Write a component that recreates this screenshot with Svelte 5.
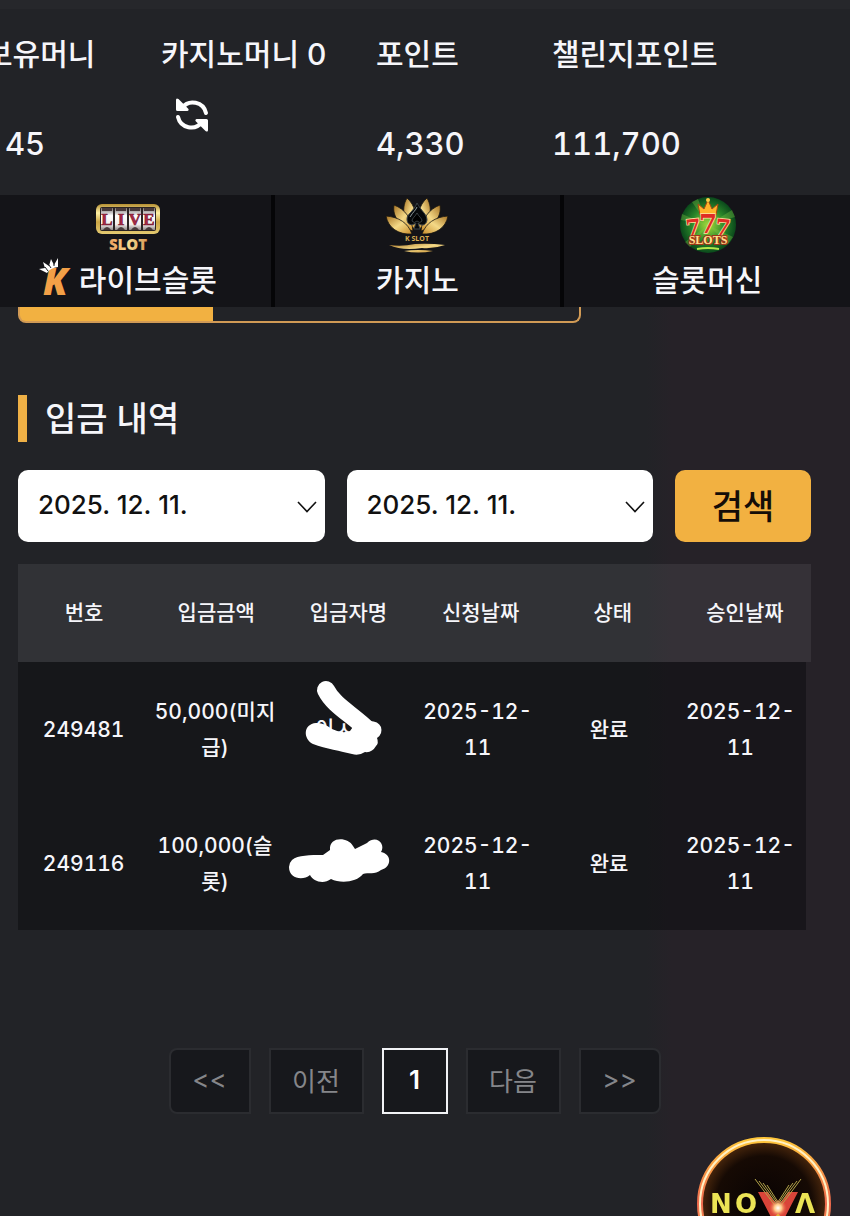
<script>
  const balances = [
    { label: '보유머니', value: '45', inset: true },
    { label: '카지노머니 0', refresh: true },
    { label: '포인트', value: '4,330' },
    { label: '챌린지포인트', value: '111,700' }
  ];
  const columns = ['번호', '입금금액', '입금자명', '신청날짜', '상태', '승인날짜'];
  const rows = [
    { id: '249481', amount: '50,000(미지급)', requested: '2025-12-11', status: '완료', approved: '2025-12-11' },
    { id: '249116', amount: '100,000(슬롯)', requested: '2025-12-11', status: '완료', approved: '2025-12-11' }
  ];
  const dates = ['시작 날짜', '종료 날짜'];
  const petals = [
    'M30 37C20 31 15 18 22 6C30 13 33 25 30 37Z',
    'M28 39C15 35 7 24 9 13C20 17 27 27 28 39Z',
    'M27 42C14 43 3 36 1 24C14 25 23 31 27 42Z'
  ];
</script>

<div class="page">
  <header class="balances">
    {#each balances as item}
      <div class="balance">
        <span class="label">{item.label}</span>
        {#if item.refresh}
          <button class="refresh" aria-label="새로고침">
            <svg width="36" height="36" viewBox="0 0 36 36" fill="none">
              <path d="M8 11A13.500 13.500 0 0 1 32 16" stroke="#fff" stroke-width="4" stroke-linecap="round" />
              <path d="M2 3V12.500Q2 14 3.500 14H13.500Q15.500 13.200 14 11.500L4.500 2Q2 .5 2 3Z" fill="#fff" />
              <path d="M28 25A13.500 13.500 0 0 1 4 20" stroke="#fff" stroke-width="4" stroke-linecap="round" />
              <path d="M34 33V23.500Q34 22 32.500 22H22.500Q20.500 22.800 22 24.500L31.500 34Q34 35.500 34 33Z" fill="#fff" />
            </svg>
          </button>
        {:else}
          <span class="value" class:inset={item.inset}>{item.value}</span>
        {/if}
      </div>
    {/each}
  </header>

  <nav class="games">
    <a href="#live">
      <svg width="66" height="56" viewBox="0 0 66 56">
        <defs>
          <linearGradient id="gold" x1="0" y1="0" x2="0" y2="1">
            <stop offset="0" stop-color="#b58f32" />
            <stop offset=".3" stop-color="#fff0a4" />
            <stop offset=".6" stop-color="#cba545" />
            <stop offset="1" stop-color="#e4ca71" />
          </linearGradient>
          <linearGradient id="reel" x1="0" y1="0" x2="0" y2="1">
            <stop offset="0" stop-color="#77706f" />
            <stop offset=".35" stop-color="#fff" />
            <stop offset=".75" stop-color="#f3eceb" />
            <stop offset="1" stop-color="#8b8382" />
          </linearGradient>
          <linearGradient id="goldText" x1="0" y1="0" x2="1" y2="0">
            <stop offset="0" stop-color="#ed9c5b" />
            <stop offset=".5" stop-color="#f7dc91" />
            <stop offset="1" stop-color="#d99955" />
          </linearGradient>
        </defs>
        <rect x="1" y="7" width="64" height="30" rx="6" fill="url(#gold)" />
        <rect x="5" y="10" width="56" height="24" rx="2" fill="#2a2323" />
        {#each ['L', 'I', 'V', 'E'] as letter, i}
          <rect x={6 + i * 14} y="11" width="12" height="22" fill="url(#reel)" />
          <path d="M{7 + i * 14} 11h10v3h-10zM{8 + i * 14} 33q4-6 8 0z" fill="#48393a" />
          <text x={12 + i * 14} y="28" text-anchor="middle" font-family="Liberation Serif" font-size="17" font-weight="700" fill="#a92945" stroke="#74172e" stroke-width=".6">{letter}</text>
        {/each}
        <text x="33" y="53" text-anchor="middle" font-family="Open Sans" font-size="15" font-weight="800" fill="url(#goldText)">SLOT</text>
      </svg>
      <span class="game-name">
        <svg width="36" height="38" viewBox="0 0 36 38">
          <text x="4" y="37" font-family="Open Sans" font-size="37" font-weight="800" font-style="italic" fill="#f3a047">K</text>
          <path d="M8 15L0 11L6 10L4 4L10 8L12 1L15 7L19 0L19 9Q11 10 8 15Z" fill="#fff" />
          <path d="M9 13L6 9M12 10L10 7M15 8L15 6" stroke="#17181c" stroke-width="1" fill="none" />
        </svg>
        라이브슬롯
      </span>
    </a>
    <a href="#casino">
      <svg width="66" height="56" viewBox="0 0 66 56">
        <defs>
          <linearGradient id="petal" x1="0" y1="0" x2="1" y2="1">
            <stop offset="0" stop-color="#a87424" />
            <stop offset=".5" stop-color="#f4d987" />
            <stop offset="1" stop-color="#c98d2b" />
          </linearGradient>
        </defs>
        <g transform="translate(1 -5)" fill="url(#petal)" stroke="#17140f" stroke-width=".8">
          {#each petals as d}<path {d} />{/each}
          <g transform="translate(64 0) scale(-1 1)">
            {#each petals as d}<path {d} />{/each}
          </g>
        </g>
        <path d="M33 6C37 14 43 17 43 23C42 29 37 29 34 26L36 32H30L32 26C28 29 23 28 23 22C23 17 30 14 33 6Z" fill="#06080a" stroke="#3b4347" />
        <path d="M26 20C29 15 32 13 33 10" stroke="#8b999e" fill="none" />
        <path d="M33 16C35 20 38 21 38 24Q36 27 33 24Q30 27 28 24C28 21 31 20 33 16Z" fill="#000" stroke="#5a6468" stroke-width=".6" />
        <text x="33" y="44" text-anchor="middle" font-family="Open Sans" font-size="7" font-weight="700" fill="#d8ac51">K SLOT</text>
        <path d="M5 48Q18 50 31 47Q45 46 61 48Q50 52 38 51Q18 54 5 48ZM20 54Q34 52 49 54Q34 57 20 54Z" fill="url(#petal)" />
      </svg>
      <span class="game-name">카지노</span>
    </a>
    <a href="#slots">
      <svg width="60" height="56" viewBox="0 0 60 56">
        <defs>
          <radialGradient id="felt">
            <stop offset="0" stop-color="#a6dc3b" />
            <stop offset=".6" stop-color="#298529" />
            <stop offset="1" stop-color="#0a481b" />
          </radialGradient>
        </defs>
        <circle cx="31" cy="28" r="28" fill="url(#felt)" />
        <path d="M31 28L5 17L4 23ZM31 28L8 45L13 50ZM31 28L55 13L58 20ZM31 28L51 47L56 40ZM31 28L15 5L21 2Z" fill="#80c946" opacity=".35" />
        <path d="M23 18L21 7L27 12L31 3L35 12L41 7L39 18Z" fill="#ffb42a" stroke="#a84912" />
        <circle cx="31" cy="3" r="2" fill="#ffce46" />
        <g font-family="DejaVu Serif" font-weight="700" text-anchor="middle" fill="#df2d24" stroke="#ffe2a1" stroke-width="1.500" paint-order="stroke">
          <text x="17" y="38" font-size="22" transform="rotate(-6 17 38)">7</text>
          <text x="45" y="38" font-size="22" transform="rotate(6 45 38)">7</text>
          <text x="31" y="36" font-size="26">7</text>
        </g>
        <text x="31" y="47" text-anchor="middle" font-family="Liberation Serif" font-size="12" font-weight="700" fill="#ffe18d" stroke="#a1341b" stroke-width="2" paint-order="stroke">SLOTS</text>
        <path d="M20 52Q31 50 42 52" stroke="#b3e84b" stroke-width="2" fill="none" />
      </svg>
      <span class="game-name">슬롯머신</span>
    </a>
  </nav>

  <main>
    <div class="tab-strip"></div>

    <h1>입금 내역</h1>

    <form class="filters" onsubmit={(e) => e.preventDefault()}>
      {#each dates as name}
        <div class="date">
          <select aria-label={name}><option>2025. 12. 11.</option></select>
          <svg class="chevron" width="20" height="12" viewBox="0 0 20 12" fill="none">
            <path d="M1 1L10 10.500L19 1" stroke="#111" stroke-width="1.600" />
          </svg>
        </div>
      {/each}
      <button class="search">검색</button>
    </form>

    <table>
      <thead>
        <tr>{#each columns as column}<th scope="col">{column}</th>{/each}</tr>
      </thead>
      <tbody>
        {#each rows as row, i}
          <tr>
            <td>{row.id}</td>
            <td>{row.amount}</td>
            <td class="name">
              {#if i === 0}
                <span class="partial">이ㅅ</span>
                <svg class="mark" width="110" height="80" viewBox="285 689 110 80" overflow="visible">
                  <path d="M325 690C333 706 351 714 368 731" stroke="#fff" stroke-width="18" stroke-linecap="round" stroke-linejoin="round" fill="none" />
                  <path d="M315 723C302 724 302 739 312 744C325 749 340 751 351 754Q358 756 364 752Q371 753 375 746Q378 743 376 738Q382 734 380 727Q377 720 366 721Q354 722 349 731Q341 734 331 729Q322 722 315 723Z" fill="#fff" />
                </svg>
              {:else}
                <svg class="mark" width="110" height="80" viewBox="285 823 110 80">
                  <path d="M291 860C297 855 309 855 322 855L329 850C328 836 347 837 352 846L354 849L366 843C376 834 385 845 380 852C391 854 391 867 380 870C374 875 367 872 362 874C356 882 340 884 330 879C322 885 312 881 309 875C302 881 288 879 288 867Q288 863 291 860Z" fill="#fff" />
                </svg>
              {/if}
            </td>
            <td>{row.requested}</td>
            <td>{row.status}</td>
            <td>{row.approved}</td>
          </tr>
        {/each}
      </tbody>
    </table>

    <nav class="pager" aria-label="페이지">
      <button class="first">&lt;&lt;</button>
      <button class="step">이전</button>
      <button class="current" aria-current="page">1</button>
      <button class="step">다음</button>
      <button class="last">&gt;&gt;</button>
    </nav>
  </main>

  <a class="nova" href="#nova" aria-label="NOVA">
    <svg width="144" height="144" viewBox="0 0 144 144">
      <defs>
        <linearGradient id="ring" x1="0" y1="0" x2="0" y2="1">
          <stop offset="0" stop-color="#ffc63a" />
          <stop offset=".3" stop-color="#f58a48" />
          <stop offset=".5" stop-color="#ef6a4e" />
          <stop offset="1" stop-color="#ffd34a" />
        </linearGradient>
        <radialGradient id="core">
          <stop offset="0" stop-color="#080303" />
          <stop offset=".75" stop-color="#160a04" />
          <stop offset="1" stop-color="#4d290d" />
        </radialGradient>
        <radialGradient id="flare">
          <stop offset="0" stop-color="#fff" />
          <stop offset=".4" stop-color="#ffc987" />
          <stop offset="1" stop-color="#f1573f" stop-opacity="0" />
        </radialGradient>
      </defs>
      <circle cx="72" cy="72" r="64" fill="url(#core)" stroke="url(#ring)" stroke-width="6" />
      <circle cx="72" cy="72" r="64" fill="none" stroke="#fff1c4" stroke-width="2" />
      <g font-family="DejaVu Sans" font-size="26" font-weight="700" fill="#ece455">
        <text x="18" y="81">N</text>
        <text x="43" y="81">O</text>
        <text x="103" y="81">Λ</text>
      </g>
      <path d="M66 60H76L86 76L96 60H106L91 89H81Z" fill="#d94439" />
      <path d="M63 47L84 75M67 49L85 73M71 51L86 72M75 53L86 70M109 47L88 75M105 49L87 73M101 51L86 72M97 53L86 70" stroke="#b3a54a" stroke-width="1" />
      <circle cx="86" cy="76" r="9" fill="url(#flare)" />
      <path d="M79 91L86 83L93 91" stroke="#e4b338" stroke-width="2" fill="none" />
    </svg>
  </a>
</div>

<style>
  :global(body) {
    margin: 0;
    background: #222327;
  }
  .page {
    min-height: 100vh;
    overflow: hidden;
    color: #f6f6fa;
    font-family: Inter, 'Noto Sans CJK KR', sans-serif;
    font-weight: 500;
    background: linear-gradient(90deg, #222327 76%, #262228 79%);
  }
  button, select {
    font: inherit;
    color: inherit;
    margin: 0;
  }
  a {
    color: inherit;
    text-decoration: none;
  }
  .balances {
    display: grid;
    grid-template-columns: 176fr 215fr 176fr 298fr;
    margin-left: -15px;
    border-top: 9px solid #26272b;
    padding: 23px 0 29px;
    background: #222327;
  }
  .balance {
    display: flex;
    flex-direction: column;
    align-items: flex-start;
    white-space: nowrap;
  }
  .label {
    font-size: 30px;
    line-height: 44px;
  }
  .value {
    margin-top: 46px;
    font-size: 31px;
    line-height: 44px;
    font-variant-numeric: tabular-nums;
  }
  .inset {
    padding-left: 20px;
  }
  .refresh {
    display: flex;
    margin: 21px 0 0 13px;
    padding: 0;
    border: 0;
    background: none;
  }
  .games {
    display: grid;
    grid-template-columns: repeat(3, 1fr);
    gap: 4px;
    margin-left: -15px;
    background: #050507;
  }
  .games a {
    display: flex;
    flex-direction: column;
    align-items: center;
    height: 112px;
    background: #141418;
  }
  .games a > svg {
    margin-top: 2px;
  }
  .game-name {
    display: flex;
    align-items: center;
    gap: 4px;
    font-family: 'Noto Sans CJK KR', sans-serif;
    font-size: 30px;
    line-height: 50px;
  }
  .game-name svg {
    margin-bottom: 2px;
  }
  main {
    padding: 0 39px 0 18px;
  }
  .tab-strip {
    width: 71%;
    height: 16px;
    box-sizing: border-box;
    border: 2px solid #d19a55;
    border-top: 0;
    border-radius: 0 0 8px 8px;
    background: linear-gradient(#f2b141, #f2b141) no-repeat border-box 0 0 / 195px 100%;
  }
  h1 {
    margin: 72px 0 28px;
    padding-left: 18px;
    border-left: 9px solid #efb046;
    font-size: 34px;
    line-height: 47px;
    font-weight: 500;
  }
  .filters {
    display: flex;
    gap: 22px;
    height: 72px;
  }
  .date {
    position: relative;
    flex: 1;
  }
  select {
    appearance: none;
    width: 100%;
    height: 100%;
    padding: 0 20px 4px;
    border: 0;
    border-radius: 10px;
    background: #fff;
    color: #111;
    font-size: 26px;
  }
  .chevron {
    position: absolute;
    right: 8px;
    top: 31px;
    pointer-events: none;
  }
  .search {
    width: 136px;
    padding: 0 0 4px;
    border: 0;
    border-radius: 10px;
    background: #f2b141;
    color: #140d08;
    font-family: 'Noto Sans CJK KR', sans-serif;
    font-size: 34px;
    font-weight: 500;
  }
  table {
    display: block;
    margin-top: 22px;
    font-size: 21px;
    line-height: 36px;
    text-align: center;
    font-variant-numeric: tabular-nums;
  }
  thead, tbody {
    display: block;
  }
  tr {
    display: grid;
    grid-template-columns: repeat(6, 1fr);
    align-items: center;
  }
  thead tr {
    height: 98px;
    background: rgba(255, 255, 255, .07);
  }
  tbody {
    margin-right: 5px;
    background: rgba(5, 6, 8, .4);
  }
  tbody tr {
    height: 134px;
  }
  th {
    font-weight: 500;
    padding: 0;
  }
  td {
    padding: 2px 5px 0;
  }
  .name {
    position: relative;
    padding: 0;
    height: 80px;
    line-height: 80px;
  }
  .partial {
    margin-right: 24px;
  }
  .mark {
    position: absolute;
    left: 5px;
    top: 0;
  }
  .pager {
    display: flex;
    justify-content: center;
    gap: 18px;
    margin-top: 118px;
    padding-bottom: 102px;
  }
  .pager button {
    width: 82px;
    height: 66px;
    padding: 0 0 3px;
    border: 2px solid #2b2c30;
    background: #17181c;
    color: #85868a;
    font-size: 26px;
    font-weight: 400;
  }
  .pager .step {
    width: 95px;
  }
  .pager .first {
    border-radius: 8px 0 0 8px;
  }
  .pager .last {
    border-radius: 0 8px 8px 0;
  }
  .pager .current {
    width: 66px;
    border-color: #f1f2f5;
    color: #fff;
    font-weight: 600;
  }
  .nova {
    position: fixed;
    right: 14px;
    bottom: -60px;
    display: flex;
  }
</style>
